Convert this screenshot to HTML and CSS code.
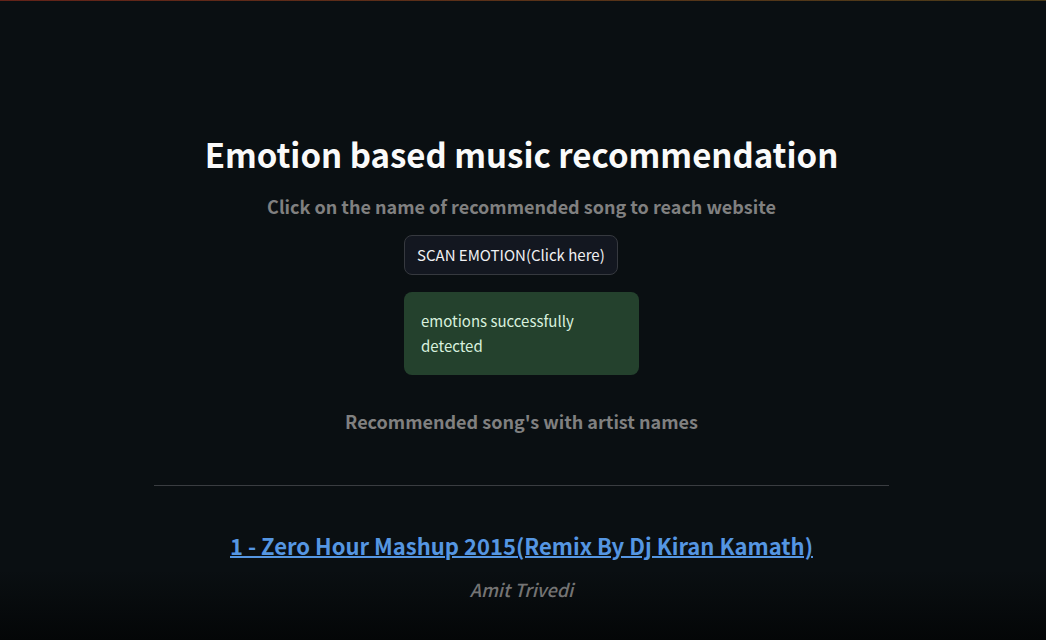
FILE: index.html
```html
<!DOCTYPE html>
<html lang="en">
<head>
<meta charset="utf-8">
<title>Emotion based music recommendation</title>
<link rel="stylesheet" href="styles.css">
</head>
<body>
<div class="decoration"></div>
<main class="container">
  <h1 class="title">Emotion based music recommendation</h1>
  <h2 class="subtitle">Click on the name of recommended song to reach website</h2>
  <div class="columns">
    <div class="column">
      <button class="scan" type="button">SCAN EMOTION(Click here)</button>
      <div class="alert" role="status">emotions successfully detected</div>
    </div>
  </div>
  <h2 class="subtitle">Recommended song's with artist names</h2>
  <hr class="divider">
  <h3 class="song"><a class="song-link" href="#">1 - Zero Hour Mashup 2015(Remix By Dj Kiran Kamath)</a></h3>
  <p class="artist">Amit Trivedi</p>
</main>
</body>
</html>
```
FILE: styles.css
```css
* {
  box-sizing: border-box;
}

body {
  margin: 0;
  min-height: 100vh;
  background: linear-gradient(to top, #040607, #0a0f12 70px);
  color: #fafafa;
  font-family: "Source Sans Pro", "Noto Sans CJK SC", sans-serif;
}

.decoration {
  height: 1px;
  background: linear-gradient(90deg, #642319, #5a3218, #4b3c19);
}

.container {
  width: 100%;
  max-width: 1043px;
  padding: 129px 14.7% 0;
}

.title {
  margin: 0;
  font-size: 33px;
  line-height: 48px;
  font-weight: 600;
  text-align: center;
}

.subtitle {
  margin: 0;
  padding: 16px 0 17px;
  font-size: 18px;
  line-height: 24px;
  font-weight: 600;
  text-align: center;
  color: #808080;
}

.columns {
  display: grid;
  grid-template-columns: 1fr 235px 1fr;
  margin-bottom: 18px;
}

.column {
  grid-column: 2;
  display: grid;
  justify-items: start;
  gap: 17px;
}

.scan {
  height: 40px;
  padding: 0 12px;
  border: 1px solid #36393f;
  border-radius: 8px;
  background: #131720;
  color: #f0f0f2;
  font: 400 15px/24px "Source Sans Pro", "Noto Sans CJK SC", sans-serif;
}

.alert {
  width: 100%;
  padding: 16px 17px 17px;
  border-radius: 8px;
  background: #24412d;
  color: #d8f0de;
  font-size: 15px;
  line-height: 25px;
}

.divider {
  margin: 35px 0 43px;
  border: 0;
  border-top: 1px solid #3a3d41;
}

.song {
  margin: 0;
  font-size: 22px;
  line-height: 32px;
  font-weight: 600;
  text-align: center;
}

.song-link {
  color: #5596e2;
  text-decoration-thickness: 2px;
}

.artist {
  margin: 14px 0;
  font-size: 18px;
  line-height: 28px;
  font-weight: 500;
  font-style: italic;
  text-align: center;
  color: #747474;
}
```
